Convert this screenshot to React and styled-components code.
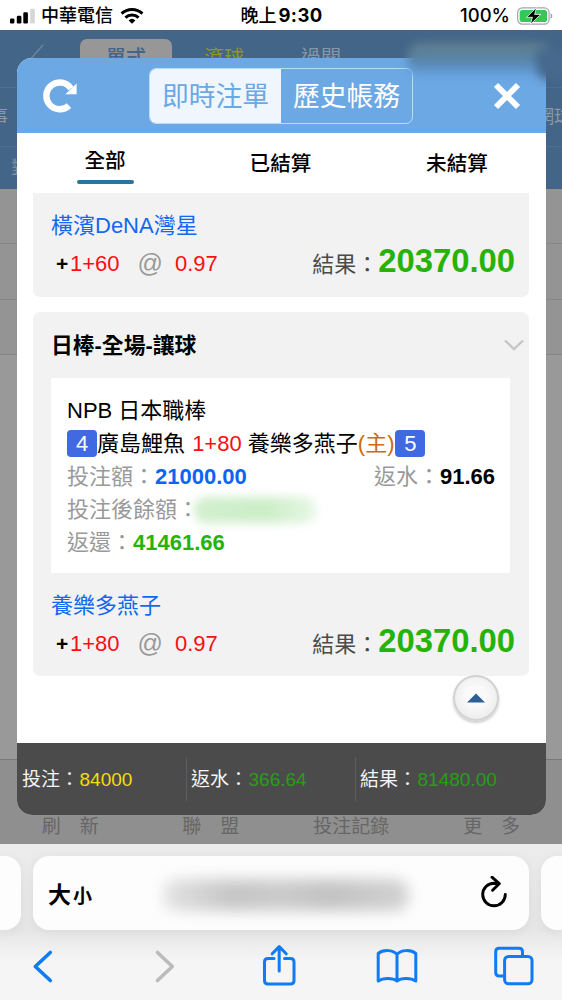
import React from "react";
import styled, { createGlobalStyle, css } from "styled-components";

const App = () => {
  return (
    <Phone>
      <GlobalStyle />
      <StatusBar>
        <StatusSide>
          <SignalIcon />
          <Carrier>中華電信</Carrier>
          <WifiIcon />
        </StatusSide>
        <Clock>
          晚上<b>9:30</b>
        </Clock>
        <StatusSide $end>
          <Battery>100%</Battery>
          <BatteryIcon />
        </StatusSide>
      </StatusBar>
      <Stage>
        <SitePage />
        <BetModal />
        <Smudge />
      </Stage>
      <Browser />
    </Phone>
  );
};

export default App;

const SitePage = () => (
  <Site>
    <SiteNav>
      <svg width="24" height="24" viewBox="0 0 24 24" fill="none">
        <path d="M22 2 L6 20" stroke="#6d8499" strokeWidth="1.6" />
      </svg>
      <SiteTab $active>單式</SiteTab>
      <SiteTab $color="#8f9a10">滾球</SiteTab>
      <SiteTab>過關</SiteTab>
    </SiteNav>
    <SiteSports>
      <span>賽事</span>
      <span>網球</span>
    </SiteSports>
    <SiteFilter>對</SiteFilter>
    <SiteRow />
    <SiteRow />
    <SiteRow />
    <SiteBody />
    <SiteMenu>
      <span>刷　新</span>
      <span>聯　盟</span>
      <span>投注記錄</span>
      <span>更　多</span>
    </SiteMenu>
  </Site>
);

const BetModal = () => (
  <Modal>
    <ModalHeader>
      <ReloadIcon />
      <Switch>
        <SwitchItem $active>即時注單</SwitchItem>
        <SwitchItem>歷史帳務</SwitchItem>
      </Switch>
      <CloseIcon />
    </ModalHeader>
    <Tabs>
      <Tab $active>全部</Tab>
      <Tab>已結算</Tab>
      <Tab>未結算</Tab>
    </Tabs>
    <List>
      <Card $cut>
        <Pick team="橫濱DeNA灣星" line="1+60" odds="0.97" result="20370.00" />
      </Card>
      <Card>
        <CardHeader>
          <span>日棒-全場-讓球</span>
          <svg width="22" height="14" viewBox="0 0 22 14" fill="none">
            <path d="M2 2.5 L11 11 L20 2.5" stroke="#c6c6c6" strokeWidth="2.4" />
          </svg>
        </CardHeader>
        <Detail>
          <Line>NPB 日本職棒</Line>
          <Line>
            <Badge>4</Badge>廣島鯉魚&nbsp;<Handicap>1+80</Handicap>
            &nbsp;養樂多燕子
            <Home>(主)</Home>
            <Badge>5</Badge>
          </Line>
          <Line $muted>
            投注額：<Amount $color="#0a64f5">21000.00</Amount>
            <Rebate>
              返水：<Amount $color="#000">91.66</Amount>
            </Rebate>
          </Line>
          <Line $muted>
            投注後餘額：
            <HiddenAmount />
          </Line>
          <Line $muted>
            返還：<Amount $color="#26b308">41461.66</Amount>
          </Line>
        </Detail>
        <Pick team="養樂多燕子" line="1+80" odds="0.97" result="20370.00" />
      </Card>
    </List>
    <TopButton>
      <svg width="20" height="10" viewBox="0 0 20 10">
        <path d="M1 9.5 L10 0.5 L19 9.5 Z" fill="#2f5f97" />
      </svg>
    </TopButton>
    <Totals>
      <Total>
        投注：<Sum $color="#f5dc0a">84000</Sum>
      </Total>
      <Total>
        返水：<Sum $color="#2a9d18">366.64</Sum>
      </Total>
      <Total>
        結果：<Sum $color="#2a9d18">81480.00</Sum>
      </Total>
    </Totals>
  </Modal>
);

const Pick = ({ team, line, odds, result }) => (
  <PickWrap>
    <Team>{team}</Team>
    <PickRow>
      <Plus>+</Plus>
      <Red>{line}</Red>
      <At>@</At>
      <Red>{odds}</Red>
      <Result>
        結果：<ResultAmount>{result}</ResultAmount>
      </Result>
    </PickRow>
  </PickWrap>
);

const Browser = () => (
  <BrowserWrap>
    <AddressRow>
      <SidePage $side="left" />
      <Address>
        <TextSize>
          大<small>小</small>
        </TextSize>
        <HiddenUrl />
        <svg width="30" height="34" viewBox="0 0 30 34" fill="none" stroke="#000" strokeWidth="2.9" strokeLinecap="round" strokeLinejoin="round">
          <path d="M26.3 18.5 A11.3 11.3 0 1 1 15 7.2 L20 7.6" />
          <path d="M13 1.2 L20.2 7.7 L13.6 14.2" />
        </svg>
      </Address>
      <SidePage $side="right" />
    </AddressRow>
    <Toolbar>
      <ToolIcon>
        <path d="M26.3 7.5 L11.3 21.5 L26.3 35.5" strokeWidth="3.6" />
      </ToolIcon>
      <ToolIcon $off>
        <path d="M15.5 7.5 L30.3 21.5 L15.5 35.5" strokeWidth="3.6" />
      </ToolIcon>
      <ToolIcon>
        <path d="M15 13.6 H9 Q5.5 13.6 5.5 17 V35.5 Q5.5 39 9 39 H31.5 Q35 39 35 35.5 V17 Q35 13.6 31.5 13.6 H25.5" />
        <path d="M20.2 26 V2.5 M13.2 8.8 L20.2 1.6 L27.2 8.8" />
      </ToolIcon>
      <ToolIcon>
        <path d="M20 9.5 C16 4.5 6 4.5 1.2 8.5 V36 C6 32.5 16 32.5 20 36 C24 32.5 34 32.5 38.8 36 V8.5 C34 4.5 24 4.5 20 9.5 V36" />
      </ToolIcon>
      <ToolIcon>
        <path d="M10 31 H5.2 Q1.7 31 1.7 27.5 V6.8 Q1.7 3.3 5.2 3.3 H25 Q28.5 3.3 28.5 6.8 V11.4" />
        <rect x="10.6" y="11.4" width="27.4" height="27.4" rx="4" />
      </ToolIcon>
    </Toolbar>
  </BrowserWrap>
);

const SignalIcon = () => (
  <svg width="25" height="16" viewBox="0 0 25 16">
    <rect x="0" y="10.5" width="4.4" height="5" rx="1.2" />
    <rect x="6.8" y="7.8" width="4.6" height="7.7" rx="1.2" />
    <rect x="13.3" y="4.2" width="4.6" height="11.3" rx="1.2" />
    <rect x="20.2" y="0.8" width="4.6" height="14.7" rx="1.2" fill="#d6d6d6" />
  </svg>
);

const WifiIcon = () => (
  <svg width="24" height="18" viewBox="0 0 24 18" fill="none" stroke="#000" strokeWidth="3">
    <path d="M1.6 6.6 A15 15 0 0 1 22.4 6.6" />
    <path d="M5.4 10.6 A9.6 9.6 0 0 1 18.6 10.6" />
    <path d="M12 16.8 L8.6 13.4 A5 5 0 0 1 15.4 13.4 Z" fill="#000" stroke="none" />
  </svg>
);

const BatteryIcon = () => (
  <svg width="36" height="18" viewBox="0 0 36 18">
    <rect x="0.7" y="0.9" width="31.4" height="16.2" rx="4.6" fill="#fff" stroke="#a5a5a5" strokeWidth="1.2" />
    <rect x="2.7" y="2.9" width="27.4" height="12.2" rx="2.8" fill="#35c759" />
    <path d="M33.6 6.3 Q35.4 7 35.4 9 Q35.4 11 33.6 11.7 Z" fill="#a5a5a5" />
    <path d="M19.5 0.5 L9.5 10.3 H15.5 L13.3 17.3 L23.8 7.4 H17.6 Z" fill="#000" stroke="#fff" strokeWidth="0.8" />
  </svg>
);

const ReloadIcon = () => (
  <svg width="34" height="34" viewBox="0 0 34 34" fill="none">
    <path d="M26 26.6 A13.4 13.4 0 1 1 28 9.6" stroke="#fff" strokeWidth="6.4" />
    <path d="M33.6 4.4 V15.2 H22.4 Z" fill="#fff" />
  </svg>
);

const CloseIcon = () => (
  <svg width="28" height="28" viewBox="0 0 28 28">
    <path d="M3 3 L25 25 M25 3 L3 25" stroke="#fff" strokeWidth="5.8" />
  </svg>
);

const GlobalStyle = createGlobalStyle`
  body {
    margin: 0;
    font-family: "Liberation Sans", "Noto Sans CJK TC", sans-serif;
  }
  * {
    box-sizing: border-box;
  }
  svg {
    display: block;
    flex: none;
  }
`;

const Phone = styled.div`
  width: 562px;
  height: 1000px;
  display: flex;
  flex-direction: column;
  overflow: hidden;
  background: #fff;
  white-space: nowrap;
`;

const StatusBar = styled.div`
  height: 30px;
  display: grid;
  grid-template-columns: 1fr auto 1fr;
  align-items: center;
  padding: 0 9px 0 10px;
  font-family: Inter, "Noto Sans CJK TC", sans-serif;
  font-size: 18px;
  line-height: 31px;
`;

const StatusSide = styled.div`
  display: flex;
  align-items: center;
  gap: 7px;
  justify-content: ${({ $end }) => ($end ? "flex-end" : "flex-start")};
`;

const Carrier = styled.span`
  margin-left: -1px;
  font-weight: 500;
`;

const Clock = styled.div`
  display: flex;
  gap: 2px;
  font-weight: 500;
  b {
    font-weight: 700;
    font-size: 18.5px;
    letter-spacing: 0.4px;
  }
`;

const Battery = styled.span`
  font-weight: 500;
  font-size: 18.5px;
`;

const Stage = styled.div`
  position: relative;
  height: 814px;
`;

const Site = styled.div`
  height: 100%;
  display: flex;
  flex-direction: column;
  background: #999;
`;

const SiteNav = styled.div`
  height: 58px;
  display: flex;
  align-items: flex-start;
  padding: 9px 0 0 21px;
  background: #436588;
  border-bottom: 1px solid #4c6e91;
  svg {
    margin: 4px 35px 0 0;
  }
`;

const SiteTab = styled.div`
  width: 92px;
  height: 40px;
  margin-right: 5px;
  border-radius: 7px;
  text-align: center;
  font-size: 20px;
  line-height: 38px;
  color: ${({ $color }) => $color || "#8797a6"};
  ${({ $active }) =>
    $active &&
    css`
      background: #979797;
      color: #436588;
      font-weight: 500;
      margin-right: 6px;
    `}
`;

const SiteSports = styled.div`
  height: 59px;
  display: flex;
  justify-content: space-between;
  overflow: hidden;
  background: #436588;
  border-bottom: 1px solid #4c6e91;
  color: #8c99a6;
  font-size: 18px;
  line-height: 58px;
  span {
    margin: 0 -10px 0 -28px;
  }
`;

const SiteFilter = styled.div`
  height: 42px;
  padding-left: 11px;
  background: #436588;
  color: #7d8fa1;
  font-size: 18px;
  line-height: 42px;
`;

const SiteRow = styled.div`
  height: 55.3px;
  background: #949494;
  border-bottom: 1px solid #858585;
`;

const SiteBody = styled.div`
  flex: 1;
`;

const SiteMenu = styled.div`
  height: 85px;
  display: grid;
  grid-template-columns: repeat(4, 1fr);
  padding-top: 53px;
  border-top: 1px solid #777;
  background: #8f8f8f;
  color: #666;
  text-align: center;
  font-size: 19px;
  line-height: 28px;
`;

const Modal = styled.div`
  position: absolute;
  top: 28px;
  left: 17px;
  width: 529px;
  height: 757px;
  display: flex;
  flex-direction: column;
  border-radius: 15px;
  overflow: hidden;
  background: #fff;
`;

/* blurred account box in the top right corner */
const Smudge = styled.div`
  position: absolute;
  top: 13px;
  left: 408px;
  width: 144px;
  height: 32px;
  border-radius: 12px;
  background: linear-gradient(to bottom, #64828f, #58819f 45%, #5c92c8 80%, #669fda);
  filter: blur(5px);
  &::after {
    content: "";
    position: absolute;
    top: 6px;
    left: 128px;
    width: 40px;
    height: 31px;
    background: #46698d;
    border-radius: 0 0 0 12px;
  }
`;

const ModalHeader = styled.div`
  height: 75px;
  flex: none;
  display: flex;
  align-items: center;
  padding: 1px 25px 0 26px;
  background: #6ca8e4;
`;

const Switch = styled.div`
  width: 264px;
  height: 56px;
  margin: 0 auto 0 72px;
  display: flex;
  border: 1.5px solid #b9dcfa;
  border-radius: 7px;
  overflow: hidden;
`;

const SwitchItem = styled.div`
  flex: 1;
  text-align: center;
  color: #fff;
  font-size: 26.8px;
  line-height: 56px;
  ${({ $active }) =>
    $active &&
    css`
      background: #f0f6fd;
      color: #6ca8e4;
    `}
`;

const Tabs = styled.div`
  height: 60px;
  flex: none;
  display: grid;
  grid-template-columns: repeat(3, 176.5px);
  justify-content: center;
  justify-items: center;
`;

const Tab = styled.div`
  width: 57px;
  height: 51px;
  display: flex;
  flex-direction: column;
  align-items: center;
  margin-left: -2px;
  font-size: 20.6px;
  font-weight: 500;
  line-height: 62px;
  ${({ $active }) =>
    $active &&
    css`
      margin-left: 0;
      line-height: 47px;
      padding-top: 4px;
      justify-content: space-between;
      &::after {
        content: "";
        width: 57px;
        height: 4px;
        margin-top: -4px;
        border-radius: 2px;
        background: #2a75a0;
      }
    `}
`;

const List = styled.div`
  flex: 1;
  padding: 0 17px 0 16px;
  overflow: hidden;
`;

const Card = styled.div`
  height: ${({ $cut }) => ($cut ? "104px" : "364px")};
  margin-bottom: 15px;
  padding: 0 0 0 18px;
  border-radius: ${({ $cut }) => ($cut ? "0 0 7px 7px" : "7px")};
  background: #f2f2f2;
`;

const CardHeader = styled.div`
  height: 66px;
  display: flex;
  align-items: center;
  justify-content: space-between;
  padding-right: 4px;
  font-size: 21.8px;
  font-weight: 600;
  span {
    margin-top: -4px;
  }
`;

const Detail = styled.div`
  width: 459px;
  height: 195px;
  padding: 16px 15px 0 16px;
  background: #fff;
`;

const Line = styled.div`
  height: 33px;
  display: flex;
  align-items: center;
  font-size: 22px;
  line-height: 33px;
  color: ${({ $muted }) => ($muted ? "#999" : "#000")};
`;

const Badge = styled.span`
  width: 30px;
  height: 27px;
  border-radius: 4px;
  background: #4169e1;
  color: #fff;
  text-align: center;
  line-height: 27px;
`;

const Red = styled.span`
  color: #fb0d12;
`;

const Handicap = styled(Red)`
  margin-left: 1px;
`;

const Home = styled.span`
  margin-right: 1px;
  color: #cf6a0a;
`;

const Amount = styled.span`
  font-weight: 700;
  color: ${({ $color }) => $color};
`;

const Rebate = styled.span`
  margin-left: auto;
`;

const HiddenAmount = styled.span`
  width: 122px;
  height: 26px;
  margin-left: -5px;
  border-radius: 12px;
  background: linear-gradient(to right, #d2efce, #cdeec8 60%, #e6f7e4);
  filter: blur(5px);
`;

const PickWrap = styled.div`
  padding-top: 16px;
`;

const Team = styled.div`
  font-size: 22px;
  line-height: 34px;
  height: 33px;
  color: #1567f2;
`;

const PickRow = styled.div`
  height: 43px;
  display: flex;
  align-items: center;
  padding: 0 14px 0 5px;
  font-size: 22px;
`;

const Plus = styled.span`
  width: 14px;
  font-size: 21px;
  font-weight: 700;
`;

const At = styled.span`
  margin: 0 12px 0 18px;
  font-size: 25px;
  color: #999;
`;

const Result = styled.span`
  margin: -3px 0 0 auto;
  display: flex;
  align-items: center;
  color: #4a4a4a;
`;

const ResultAmount = styled.span`
  margin-top: -2px;
  font-size: 32.8px;
  font-weight: 700;
  color: #26b308;
`;

const TopButton = styled.div`
  position: absolute;
  left: 436px;
  top: 617px;
  width: 46px;
  height: 46px;
  display: flex;
  align-items: center;
  justify-content: center;
  border: 2px solid #d2d2d2;
  border-radius: 50%;
  background: radial-gradient(circle at 50% 45%, #fafafa 30%, #e6e6e6);
  box-shadow: 0 2px 3px rgba(0, 0, 0, 0.2);
`;

const Totals = styled.div`
  height: 72px;
  flex: none;
  display: grid;
  grid-template-columns: 169px 169px 1fr;
  align-items: center;
  background: #4b4b4b;
`;

const Total = styled.div`
  height: 44px;
  padding-left: 5px;
  color: #f5f5f5;
  font-size: 19px;
  line-height: 45px;
  & + & {
    padding-left: 4px;
    border-left: 1px solid #5e5e5e;
  }
`;

const Sum = styled.span`
  margin-left: 0.5px;
  color: ${({ $color }) => $color};
`;

const BrowserWrap = styled.div`
  flex: 1;
  padding-top: 12px;
  background: linear-gradient(to bottom, #ececec, #e6e6e6 55%, #f5f5f5 75%);
`;

const AddressRow = styled.div`
  height: 74px;
  display: flex;
  justify-content: space-between;
`;

const SidePage = styled.div`
  width: 21px;
  background: #fdfdfd;
  border-radius: ${({ $side }) =>
    $side === "left" ? "0 16px 16px 0" : "16px 0 0 16px"};
  box-shadow: 0 2px 12px rgba(0, 0, 0, 0.06);
`;

const Address = styled.div`
  width: 496px;
  display: flex;
  align-items: center;
  justify-content: space-between;
  padding: 0 20px 0 15px;
  border-radius: 16px;
  background: #fdfdfd;
  box-shadow: 0 2px 12px rgba(0, 0, 0, 0.06);
`;

const TextSize = styled.div`
  font-size: 23px;
  font-weight: 700;
  small {
    margin-left: 2px;
    font-size: 19px;
  }
`;

const HiddenUrl = styled.div`
  width: 246px;
  height: 32px;
  margin-top: 3px;
  border-radius: 14px;
  background: linear-gradient(to right, #e4e4e4, #c6c6c6 28%, #cbcbcb 48%, #c3c3c3 68%, #d2d2d2);
  filter: blur(7px);
`;

const Toolbar = styled.div`
  height: 70px;
  display: flex;
  justify-content: space-between;
  padding: 14px 28px 0 24px;
`;

const ToolIcon = styled.svg.attrs({ viewBox: "0 0 40 42" })`
  width: 40px;
  height: 42px;
  margin-top: 0.5px;
  overflow: visible;
  fill: none;
  stroke: ${({ $off }) => ($off ? "#bbb" : "#0f7bf5")};
  stroke-width: 3;
  stroke-linecap: round;
  stroke-linejoin: round;
`;
